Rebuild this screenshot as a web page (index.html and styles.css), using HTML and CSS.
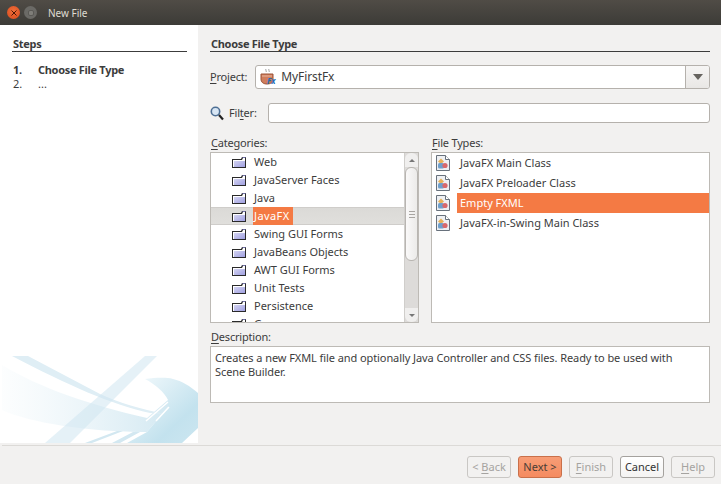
FILE: index.html
```html
<!DOCTYPE html>
<html lang="en">
<head>
<meta charset="utf-8">
<title>New File</title>
<link rel="stylesheet" href="styles.css">
</head>
<body>
<svg class="defs" width="0" height="0" aria-hidden="true">
  <defs>
    <linearGradient id="fold" x1="0" y1="0" x2="1" y2="1">
      <stop offset="0" stop-color="#d4d4f2"/><stop offset="1" stop-color="#a0a0e0"/>
    </linearGradient>
    <linearGradient id="wmA" x1="0" y1="0" x2="1" y2="0">
      <stop offset="0" stop-color="#e4f1f7" stop-opacity=".1"/><stop offset="1" stop-color="#d4e9f2"/>
    </linearGradient>
    <linearGradient id="wmB" x1="0" y1="0" x2="1" y2="1">
      <stop offset="0" stop-color="#f6fbfd"/><stop offset=".7" stop-color="#c3e2ee"/><stop offset="1" stop-color="#cce6f0"/>
    </linearGradient>
    <symbol id="folder" viewBox="0 0 14 11">
      <path d="M0 2h9l1-2h4v11H0z" fill="#2a2a2a"/>
      <path d="M1 3h9l1-2h2v9H1z" fill="#fff"/>
      <path d="M2 4h11v6H2z" fill="url(#fold)"/>
      <path d="M10.500 .5h3" stroke="#7272a8"/>
    </symbol>
    <symbol id="fxfile" viewBox="0 0 14 16">
      <path d="M.5.500h9l4 4v11H.5z" fill="#eef0f3" stroke="#68717c"/>
      <path d="M9.500 .5v4h4" fill="#fff" stroke="#68717c"/>
      <path d="M5 3.500l3 3-3 2.500-3-2.500z" fill="#e8b25a"/>
      <rect x="2" y="8" width="6" height="5.500" rx="1.500" fill="#6f9fcb"/>
      <circle cx="9" cy="10.500" r="2.600" fill="#d9686b"/>
    </symbol>
  </defs>
</svg>
<div class="window">
  <header class="titlebar">
    <span class="wbtn close">
      <svg viewBox="0 0 6 6" width="6" height="6"><path d="M.5.500l5 5M5.500.500l-5 5" stroke="#4a1505" stroke-width="1"/></svg>
    </span>
    <span class="wbtn mini"><span class="mini-in"></span></span>
    <span class="title">New File</span>
  </header>
  <div class="main">
    <aside class="steps">
      <div class="steps-top">
        <h2 class="heading">Steps</h2>
        <ol class="steplist">
          <li class="step active"><span class="num">1.</span><span>Choose File Type</span></li>
          <li class="step"><span class="num">2.</span><span>...</span></li>
        </ol>
      </div>
      <svg class="watermark" viewBox="0 356 198 87" width="198" height="87" aria-hidden="true">
        <path d="M2 365C40 388 90 405 147 418L168 400V407L147 432C90 432 30 423 2 410z" fill="url(#wmA)"/>
        <path d="M12 356h16L100 394C120 403 140 409 165 414L150 413C110 404 70 386 12 356z" fill="#dfeef5"/>
        <path d="M145 356h12L70 443H45z" fill="#cfe5f0" opacity=".55"/>
        <path d="M145 379C155 378 165 377 173 379 182 381 190 386 198 393V428L182 443H127L147 432 168 407V400C165 393 155 384 145 379z" fill="url(#wmB)"/>
        <path d="M146 421L168 402M156 421L169 407" stroke="#fff" stroke-width="1.500" fill="none"/>
        <path d="M117 431h6L92 443h-7zM133 432h7L120 443h-8z" fill="#d3e8f1"/>
      </svg>
    </aside>
    <main class="content">
      <h2 class="heading">Choose File Type</h2>
      <div class="project-row">
        <label class="lbl"><u>P</u>roject:</label>
        <div class="combo">
          <span class="combo-val">
            <svg class="cup" viewBox="0 0 18 16" width="18" height="16" aria-hidden="true">
              <path d="M6 0c-1 1 1 2 0 3M9 0c-1 1 1 2 0 3" stroke="#9a9a9a" fill="none"/>
              <path d="M1 5h12v5c0 3-2 5-6 5s-6-2-6-5z" fill="#cf7d5c" stroke="#9a5336"/>
              <path d="M2 7h10" stroke="#eab79f"/>
              <text class="fx" x="7" y="15">Fx</text>
            </svg>
            MyFirstFx
          </span>
          <span class="combo-arrow"><span class="tri"></span></span>
        </div>
      </div>
      <div class="filter-row">
        <svg class="search" viewBox="0 0 14 15" width="14" height="15" aria-hidden="true">
          <circle cx="5.500" cy="5.500" r="4.200" fill="#d8e6f4" stroke="#4e6f94" stroke-width="1.600"/>
          <path d="M9 9l4 4.500" stroke="#222" stroke-width="2.200"/>
        </svg>
        <label class="lbl">Fil<u>t</u>er:</label>
        <div class="input"></div>
      </div>
      <div class="lists">
        <section class="col-cat">
          <label class="lbl"><u>C</u>ategories:</label>
          <div class="listbox">
            <ul class="tree">
              <li class="tree-row"><svg class="ficon"><use href="#folder"/></svg><span class="tlabel">Web</span></li>
              <li class="tree-row"><svg class="ficon"><use href="#folder"/></svg><span class="tlabel">JavaServer Faces</span></li>
              <li class="tree-row"><svg class="ficon"><use href="#folder"/></svg><span class="tlabel">Java</span></li>
              <li class="tree-row sel"><svg class="ficon"><use href="#folder"/></svg><span class="tlabel">JavaFX</span></li>
              <li class="tree-row"><svg class="ficon"><use href="#folder"/></svg><span class="tlabel">Swing GUI Forms</span></li>
              <li class="tree-row"><svg class="ficon"><use href="#folder"/></svg><span class="tlabel">JavaBeans Objects</span></li>
              <li class="tree-row"><svg class="ficon"><use href="#folder"/></svg><span class="tlabel">AWT GUI Forms</span></li>
              <li class="tree-row"><svg class="ficon"><use href="#folder"/></svg><span class="tlabel">Unit Tests</span></li>
              <li class="tree-row"><svg class="ficon"><use href="#folder"/></svg><span class="tlabel">Persistence</span></li>
              <li class="tree-row"><svg class="ficon"><use href="#folder"/></svg><span class="tlabel">Groovy</span></li>
            </ul>
            <div class="scrollbar">
              <span class="sb-btn up"><span class="tri small up-tri"></span></span>
              <span class="sb-thumb"><span class="grip"></span></span>
              <span class="sb-track"></span>
              <span class="sb-btn down"><span class="tri small"></span></span>
            </div>
          </div>
        </section>
        <section class="col-type">
          <label class="lbl"><u>F</u>ile Types:</label>
          <ul class="types">
            <li class="type-row"><svg class="ticon"><use href="#fxfile"/></svg><span class="tname">JavaFX Main Class</span></li>
            <li class="type-row"><svg class="ticon"><use href="#fxfile"/></svg><span class="tname">JavaFX Preloader Class</span></li>
            <li class="type-row sel"><svg class="ticon"><use href="#fxfile"/></svg><span class="tname">Empty FXML</span></li>
            <li class="type-row"><svg class="ticon"><use href="#fxfile"/></svg><span class="tname">JavaFX-in-Swing Main Class</span></li>
          </ul>
        </section>
      </div>
      <label class="lbl desc-lbl"><u>D</u>escription:</label>
      <div class="desc">Creates a new FXML file and optionally Java Controller and CSS files. Ready to be used with Scene Builder.</div>
    </main>
  </div>
  <footer class="footer">
    <button class="btn" disabled>&lt; <u>B</u>ack</button>
    <button class="btn primary">Next &gt;</button>
    <button class="btn" disabled><u>F</u>inish</button>
    <button class="btn cancel">Cancel</button>
    <button class="btn" disabled><u>H</u>elp</button>
  </footer>
</div>
</body>
</html>
```
FILE: styles.css
```css
* { box-sizing: border-box; }
html, body { margin: 0; padding: 0; }
body {
  width: 721px; height: 484px; overflow: hidden;
  background: #f2f1f0; color: #3c3c3c;
  font: 11px/14px "Noto Sans", "Open Sans", sans-serif;
}
.defs { display: block; height: 0; }
ul, ol { list-style: none; margin: 0; padding: 0; }
u { text-underline-offset: 2px; }
.window { width: 721px; height: 484px; display: flex; flex-direction: column; }

.titlebar {
  height: 25px; flex: none; display: flex; align-items: center;
  padding-left: 7px; gap: 4px;
  background: linear-gradient(#504c46, #3c3b37);
  color: #dfdbd2;
}
.wbtn {
  width: 13px; height: 13px; flex: none; border-radius: 50%;
  display: flex; align-items: center; justify-content: center;
}
.close { background: radial-gradient(circle at 50% 40%, #f0703c, #d9481a); }
.mini { background: #6b6a66; }
.mini-in { width: 6px; height: 6px; border-radius: 2px; background: #7f7e79; border: 1px solid #5a5955; }
.title { margin-left: 7px; font-size: 10px; }

.main { flex: 1; display: flex; min-height: 0; }
.steps {
  width: 198px; flex: none; background: #fff;
  display: flex; flex-direction: column; justify-content: space-between;
}
.steps-top { padding: 12px 11px 0 12px; }
.heading {
  margin: 0; font-size: 11px; font-weight: 700; line-height: 14px; letter-spacing: -.3px;
  height: 15px; padding-left: 1px; border-bottom: 1px solid #3c3c3c; color: #3c3c3c;
}
.steplist { margin-top: 11px; padding-left: 1px; }
.step { display: flex; height: 14px; }
.step.active { font-weight: 700; letter-spacing: -.3px; }
.num { width: 25px; }
.watermark { display: block; flex: none; }

.content { flex: 1; padding: 12px 11px 0 12px; display: flex; flex-direction: column; }
.lbl { display: block; letter-spacing: -.2px; }
.project-row { display: flex; align-items: center; margin-top: 13px; height: 24px; gap: 8px; }
.combo {
  flex: 1; height: 24px; display: flex; background: #fff;
  border: 1px solid #b5b1ac; border-radius: 3px;
}
.combo-val { flex: 1; display: flex; align-items: center; gap: 3px; padding-left: 4px; font-size: 12px; letter-spacing: -.1px; }
.cup { flex: none; }
.fx { font: italic 700 8px "Noto Sans", sans-serif; fill: #1f6db5; }
.combo-arrow {
  width: 24px; background: linear-gradient(#f6f5f4, #e9e7e5);
  border-left: 1px solid #b5b1ac; border-radius: 0 2px 2px 0;
  display: flex; align-items: center; justify-content: center;
}
.tri {
  width: 0; height: 0; border-style: solid; border-color: #66635f transparent transparent;
  border-width: 6px 5px 0;
}
.tri.small { border-width: 3px 3px 0; border-top-color: #777; }
.tri.up-tri { transform: rotate(180deg); }
.filter-row { display: flex; align-items: center; height: 20px; margin-top: 14px; }
.search { flex: none; }
.filter-row .lbl { margin-left: 5px; }
.input {
  flex: 1; height: 20px; margin-left: 11px; background: #fff;
  border: 1px solid #b5b1ac; border-radius: 3px;
}
.lists { display: flex; gap: 12px; margin-top: 13px; }
.col-cat { width: 209px; flex: none; }
.col-type { flex: 1; }
.lists .lbl, .desc-lbl { padding-left: 1px; }
.listbox, .types {
  margin-top: 2px; height: 171px; background: #fff;
  border: 1px solid #bdbab5;
}
.listbox { display: flex; overflow: hidden; }
.tree { flex: 1; overflow: hidden; }
.tree-row {
  height: 18px; display: flex; align-items: center; padding-left: 21px;
}
.tree-row.sel {
  background: linear-gradient(#dbdad7, #e0dfdc);
  border-top: 1px solid #cfcdca; border-bottom: 1px solid #cfcdca;
}
.ficon { width: 14px; height: 11px; flex: none; }
.tlabel { margin-left: 7px; padding: 0 1px; height: 18px; line-height: 18px; }
.tree-row.sel .tlabel {
  background: #f47a44; color: #fff; padding-right: 3px; margin-top: -1px; margin-bottom: -1px;
  letter-spacing: .4px;
}
.scrollbar {
  width: 14px; flex: none; display: flex; flex-direction: column;
  background: #dddbd9; border-left: 1px solid #d0cecb;
}
.sb-btn {
  height: 14px; flex: none; display: flex; align-items: center; justify-content: center;
  background: #f0efee;
}
.sb-btn.up { border-radius: 6px 6px 0 0; }
.sb-btn.down { border-radius: 0 0 6px 6px; }
.sb-thumb {
  height: 94px; flex: none; background: linear-gradient(90deg, #faf9f9, #ecebe9);
  border: 1px solid #b8b5b1; border-radius: 6px;
  display: flex; align-items: center; justify-content: center;
}
.grip {
  width: 6px; height: 7px;
  background: repeating-linear-gradient(#a8a5a1 0 1px, transparent 1px 3px);
}
.sb-track { flex: 1; }
.types { padding: 0; }
.type-row { height: 20px; display: flex; align-items: center; padding-left: 4px; }
.ticon { width: 14px; height: 16px; flex: none; }
.tname { margin-left: 7px; padding-left: 3px; flex: 1; line-height: 20px; height: 20px; }
.type-row.sel .tname { background: #f47a44; color: #fff; }
.desc-lbl { margin-top: 7px; }
.desc {
  margin-top: 2px; height: 57px; background: #fff;
  border: 1px solid #bdbab5; padding: 4px 30px 4px 4px; line-height: 14px; letter-spacing: -.08px;
}
.footer {
  height: 39px; flex: none; display: flex; justify-content: flex-end; gap: 7px;
  align-items: flex-start; padding: 10px 6px 0 0;
  border-top: 1px solid #dcdad7; margin-top: 2px; margin-left: 2px;
}
.btn {
  width: 44px; height: 22px; padding: 0; font: inherit;
  border: 1px solid #c9c7c4; border-radius: 3px; background: #f2f1f0; color: #a5a3a0;
}
.btn.primary {
  background: linear-gradient(#f79d76, #f58b60); border-color: #c9704a; color: #4a3d36;
}
.btn.cancel {
  background: linear-gradient(#fff, #f4f3f2); border-color: #a5a29e; color: #333;
}
```
